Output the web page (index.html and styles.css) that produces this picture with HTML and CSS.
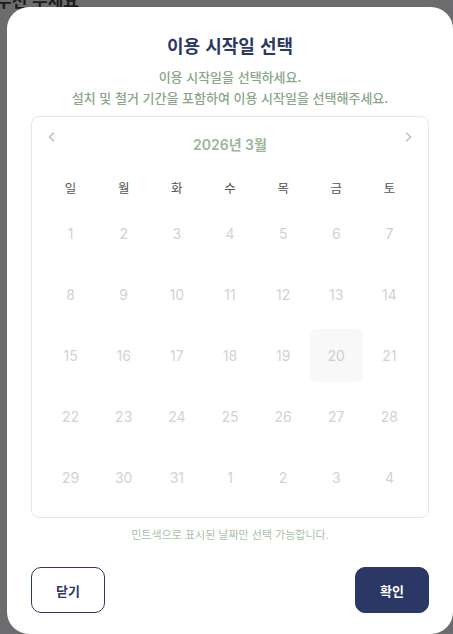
FILE: index.html
```html
<!DOCTYPE html>
<html lang="ko">
<head>
<meta charset="utf-8">
<link rel="stylesheet" href="styles.css">
</head>
<body>
<div class="backdrop-text">우션 주세요</div>
<div class="modal">
  <h1 class="title">이용 시작일 선택</h1>
  <p class="subtitle">이용 시작일을 선택하세요.<br>설치 및 철거 기간을 포함하여 이용 시작일을 선택해주세요.</p>
  <div class="calendar">
    <div class="cal-head">
      <span class="nav">
        <svg width="10" height="14" viewBox="0 0 10 14"><path d="M6.5 3 L2.5 7 L6.5 11" fill="none" stroke="currentColor" stroke-width="1.2" stroke-linecap="round" stroke-linejoin="round"/></svg>
      </span>
      <span class="month">2026년 3월</span>
      <span class="nav">
        <svg width="10" height="14" viewBox="0 0 10 14"><path d="M3.5 3 L7.5 7 L3.5 11" fill="none" stroke="currentColor" stroke-width="1.2" stroke-linecap="round" stroke-linejoin="round"/></svg>
      </span>
    </div>
    <div class="weekdays">
      <span>일</span><span>월</span><span>화</span><span>수</span><span>목</span><span>금</span><span>토</span>
    </div>
    <div class="days">
      <span>1</span><span>2</span><span>3</span><span>4</span><span>5</span><span>6</span><span>7</span>
      <span>8</span><span>9</span><span>10</span><span>11</span><span>12</span><span>13</span><span>14</span>
      <span>15</span><span>16</span><span>17</span><span>18</span><span>19</span><span class="today">20</span><span>21</span>
      <span>22</span><span>23</span><span>24</span><span>25</span><span>26</span><span>27</span><span>28</span>
      <span>29</span><span>30</span><span>31</span><span>1</span><span>2</span><span>3</span><span>4</span>
    </div>
  </div>
  <p class="note">민트색으로 표시된 날짜만 선택 가능합니다.</p>
  <div class="actions">
    <button class="btn btn-close">닫기</button>
    <button class="btn btn-ok">확인</button>
  </div>
</div>
</body>
</html>
```

FILE: styles.css
```css
* { box-sizing: border-box; }
html, body { margin: 0; height: 100%; }
body {
  background: #6c6c6e;
  font-family: Inter, "Noto Sans CJK KR", sans-serif;
  padding: 7px 0 0 7px;
  overflow: hidden;
  position: relative;
}
.backdrop-text {
  position: absolute;
  left: -4px;
  top: -13px;
  font-size: 17px;
  font-weight: 700;
  color: #1c1c1c;
  font-family: "Noto Sans CJK KR", sans-serif;
}
.modal {
  position: relative;
  width: 446px;
  height: 627px;
  background: #fff;
  border-radius: 22px;
  padding: 25px 24px 0;
  display: flex;
  flex-direction: column;
}
.title {
  margin: 0;
  text-align: center;
  font-size: 18px;
  line-height: 26px;
  font-weight: 700;
  color: #2b3866;
  font-family: "Noto Sans CJK KR", sans-serif;
}
.subtitle {
  margin: 8px 0 0;
  text-align: center;
  font-size: 13px;
  line-height: 21px;
  color: #8aa58a;
  font-family: "Noto Sans CJK KR", sans-serif;
  font-weight: 500;
}
.calendar {
  margin-top: 8px;
  border: 1px solid #e6e6e6;
  border-radius: 8px;
  padding: 12px 12px 12px;
  height: 402px;
}
.cal-head {
  display: flex;
  justify-content: space-between;
  align-items: flex-start;
  height: 40px;
  color: #aabfaa;
}
.nav {
  width: 16px;
  height: 16px;
  display: flex;
  align-items: center;
  justify-content: center;
}
.month {
  margin-top: 6px;
  font-size: 14px;
  line-height: 20px;
  font-weight: 600;
  color: #9bb59b;
}
.weekdays {
  display: grid;
  grid-template-columns: repeat(7, 1fr);
  height: 36px;
  align-items: center;
  font-size: 12.5px;
  color: #555;
  font-family: "Noto Sans CJK KR", sans-serif;
}
.weekdays span, .days span { text-align: center; }
.days {
  margin-top: 2px;
  display: grid;
  grid-template-columns: repeat(7, 1fr);
  grid-auto-rows: 53px;
  row-gap: 8px;
  font-size: 14px;
  color: #d2d2d2;
}
.days span {
  display: flex;
  align-items: center;
  justify-content: center;
  border-radius: 6px;
}
.days .today {
  background: #f8f8f8;
  color: #cfcfcf;
}
.note {
  margin: 8px 0 0;
  text-align: center;
  font-size: 11px;
  line-height: 16px;
  color: #a9c2a9;
  font-family: "Noto Sans CJK KR", sans-serif;
}
.actions {
  margin-top: 25px;
  display: flex;
  justify-content: space-between;
}
.btn {
  width: 74px;
  height: 46px;
  border-radius: 10px;
  font-size: 13px;
  font-weight: 700;
  font-family: "Noto Sans CJK KR", sans-serif;
  cursor: pointer;
}
.btn-close {
  background: #fff;
  border: 1px solid #2b3866;
  color: #2b3866;
}
.btn-ok {
  background: #2b3866;
  border: 1px solid #2b3866;
  color: #fff;
}
```
